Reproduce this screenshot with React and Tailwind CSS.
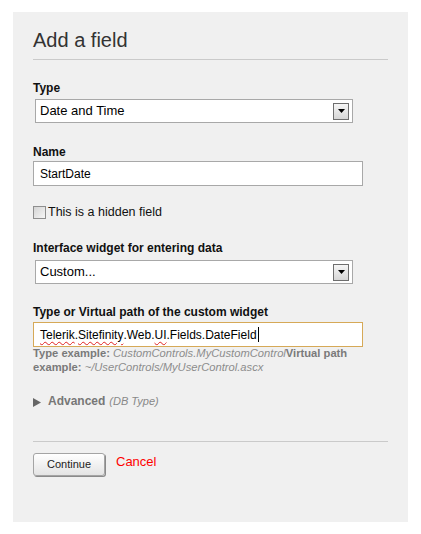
export default function App() {
  const DropBtn = () => (
    <div className="w-[16px] h-[17px] border border-[#6e6e6e] bg-linear-to-b from-[#f6f6f6] to-[#d6d6d6] flex items-center justify-center">
      <svg width="7" height="4" viewBox="0 0 7 4">
        <polygon points="0,0 7,0 3.5,4" fill="#000" />
      </svg>
    </div>
  );
  const wavy = "underline decoration-wavy decoration-[#e02020] decoration-1 underline-offset-[2px]";
  return (
    <div className="w-[421px] h-[534px] bg-white pt-[12px] pl-[13px] font-['Liberation_Sans',Arial,sans-serif]">
      <div className="w-[395px] h-[510px] bg-[#f0f0f0] pt-[16px] px-[20px] flex flex-col">
        <div className="text-[20px] leading-[24px] text-[#333]">Add a field</div>
        <div className="mt-[7px] h-px bg-[#cacaca] w-[355px]" />

        <div className="mt-[21px] text-[12px] leading-[14px] font-bold text-[#111]">Type</div>
        <div className="mt-[4px] ml-[2px] w-[318px] h-[24px] border border-[#a8a8a8] bg-white flex items-center pl-[4px] pr-[3px] text-[13px] text-black">
          <span className="flex-1">Date and Time</span>
          <DropBtn />
        </div>

        <div className="mt-[22px] text-[12px] leading-[14px] font-bold text-[#111]">Name</div>
        <div className="mt-[2px] w-[330px] h-[25px] border border-[#a8a8a8] bg-white flex items-center pl-[6px] text-[12px] text-black">
          StartDate
        </div>

        <div className="mt-[19px] flex items-center h-[15px]">
          <div className="w-[13px] h-[13px] border border-[#8e8e8e] bg-linear-to-br from-[#d4d4d4] to-[#f6f6f6]" />
          <span className="ml-[2px] text-[12.5px] leading-[15px] text-[#111]">This is a hidden field</span>
        </div>

        <div className="mt-[21px] text-[12px] leading-[14px] font-bold text-[#111]">Interface widget for entering data</div>
        <div className="mt-[5px] ml-[2px] w-[318px] h-[24px] border border-[#a8a8a8] bg-white flex items-center pl-[4px] pr-[3px] text-[13px] text-black">
          <span className="flex-1">Custom...</span>
          <DropBtn />
        </div>

        <div className="mt-[21px] text-[12px] leading-[14px] font-bold text-[#111]">Type or Virtual path of the custom widget</div>
        <div className="mt-[3px] w-[330px] h-[25px] border border-[#d6a957] bg-white flex items-center pl-[6px] text-[12px] text-black">
          <span className={wavy}>Telerik</span>.<span className={wavy}>Sitefinity</span>.Web.<span className={wavy}>UI</span>.Fields.DateField
          <span className="inline-block w-px h-[15px] bg-black ml-[1px]" />
        </div>
        <div className="text-[11.2px] leading-[13.5px] whitespace-nowrap">
          <span className="font-bold text-[#7a7a7a]">Type example: </span>
          <span className="italic text-[#8c8c8c]">CustomControls.MyCustomControl</span>
          <span className="font-bold text-[#7a7a7a]">Virtual path</span>
          <br />
          <span className="font-bold text-[#7a7a7a]">example: </span>
          <span className="italic text-[#8c8c8c]">~/UserControls/MyUserControl.ascx</span>
        </div>

        <div className="mt-[20px] flex items-center h-[14px]">
          <svg width="8" height="9" viewBox="0 0 8 9" className="mt-[2px]">
            <polygon points="0,0 8,4.5 0,9" fill="#666" />
          </svg>
          <span className="ml-[7px] text-[12px] leading-[14px] font-bold text-[#777]">Advanced</span>
          <span className="ml-[4px] text-[11px] leading-[14px] italic text-[#888]">(DB Type)</span>
        </div>

        <div className="mt-[33px] h-px bg-[#cacaca] w-[355px]" />

        <div className="mt-[11px] flex items-start">
          <button className="w-[72px] h-[23px] rounded-[3px] border border-[#a4a4a4] bg-linear-to-b from-white to-[#e4e4e4] shadow-[1px_1px_0_#8a8a8a] text-[11px] text-[#222] flex items-center justify-center">
            Continue
          </button>
          <span className="ml-[11px] mt-[1px] text-[13px] leading-[16px] text-[#f00]">Cancel</span>
        </div>
      </div>
    </div>
  );
}
